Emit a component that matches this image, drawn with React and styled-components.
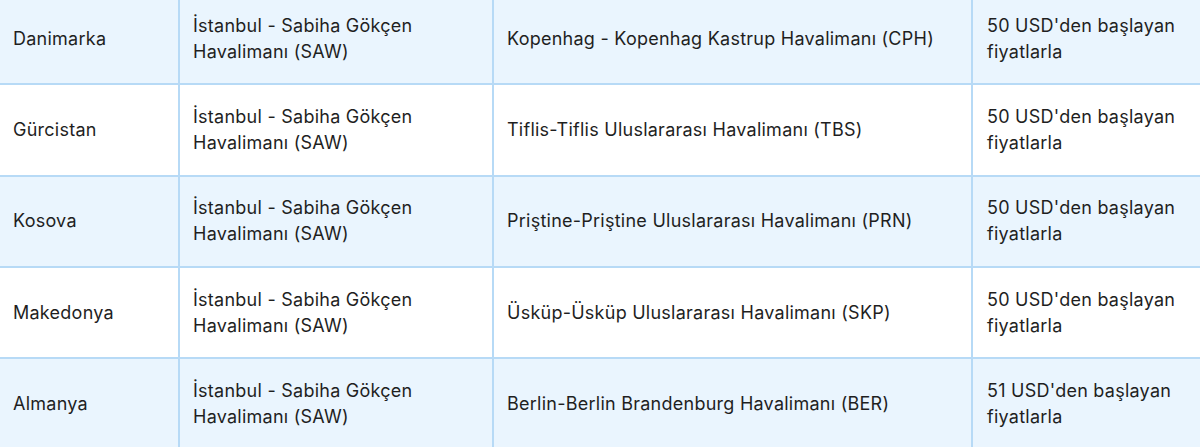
import React from "react";
import styled, { createGlobalStyle } from "styled-components";

const Global = createGlobalStyle`
  html, body { margin: 0; padding: 0; background: #ffffff; }
  body { font-family: Inter, "Noto Sans", "Liberation Sans", sans-serif; overflow: hidden; }
`;

const Wrap = styled.div`
  margin-top: -6px;
  width: 1200px;
`;

const Table = styled.table`
  width: 1200px;
  border-collapse: separate;
  border-spacing: 0;
  table-layout: fixed;
`;

const Row = styled.tr`
  background: ${(p) => (p.$shaded ? "#eaf5fe" : "#ffffff")};
`;

const Cell = styled.td`
  box-sizing: content-box;
  padding: 18.67px 10px 18.67px ${(p) => p.$pl || 13}px;
  border-bottom: 2px solid #b7daf6;
  border-right: ${(p) => (p.$last ? "none" : "2px solid #b7daf6")};
  font-size: 18px;
  letter-spacing: 0.25px;
  line-height: 26px;
  color: #1f1f1f;
  vertical-align: middle;
  text-align: left;
  height: 52px;
`;

const cols = [178, 312, 477, 227];

const data = [
  ["Danimarka", "İstanbul - Sabiha Gökçen Havalimanı (SAW)", "Kopenhag - Kopenhag Kastrup Havalimanı (CPH)", "50 USD'den başlayan fiyatlarla"],
  ["Gürcistan", "İstanbul - Sabiha Gökçen Havalimanı (SAW)", "Tiflis-Tiflis Uluslararası Havalimanı (TBS)", "50 USD'den başlayan fiyatlarla"],
  ["Kosova", "İstanbul - Sabiha Gökçen Havalimanı (SAW)", "Priştine-Priştine Uluslararası Havalimanı (PRN)", "50 USD'den başlayan fiyatlarla"],
  ["Makedonya", "İstanbul - Sabiha Gökçen Havalimanı (SAW)", "Üsküp-Üsküp Uluslararası Havalimanı (SKP)", "50 USD'den başlayan fiyatlarla"],
  ["Almanya", "İstanbul - Sabiha Gökçen Havalimanı (SAW)", "Berlin-Berlin Brandenburg Havalimanı (BER)", "51 USD'den başlayan fiyatlarla"],
];

const pads = [13, 13, 13, 14];

export default function App() {
  return (
    <>
      <Global />
      <Wrap>
        <Table>
          <colgroup>
            {cols.map((w, i) => (
              <col key={i} style={{ width: w + (i < 3 ? 2 : 0) }} />
            ))}
          </colgroup>
          <tbody>
            {data.map((r, i) => (
              <Row key={i} $shaded={i % 2 === 0}>
                {r.map((c, j) => (
                  <Cell key={j} $pl={pads[j]} $last={j === 3}>
                    {c}
                  </Cell>
                ))}
              </Row>
            ))}
          </tbody>
        </Table>
      </Wrap>
    </>
  );
}
